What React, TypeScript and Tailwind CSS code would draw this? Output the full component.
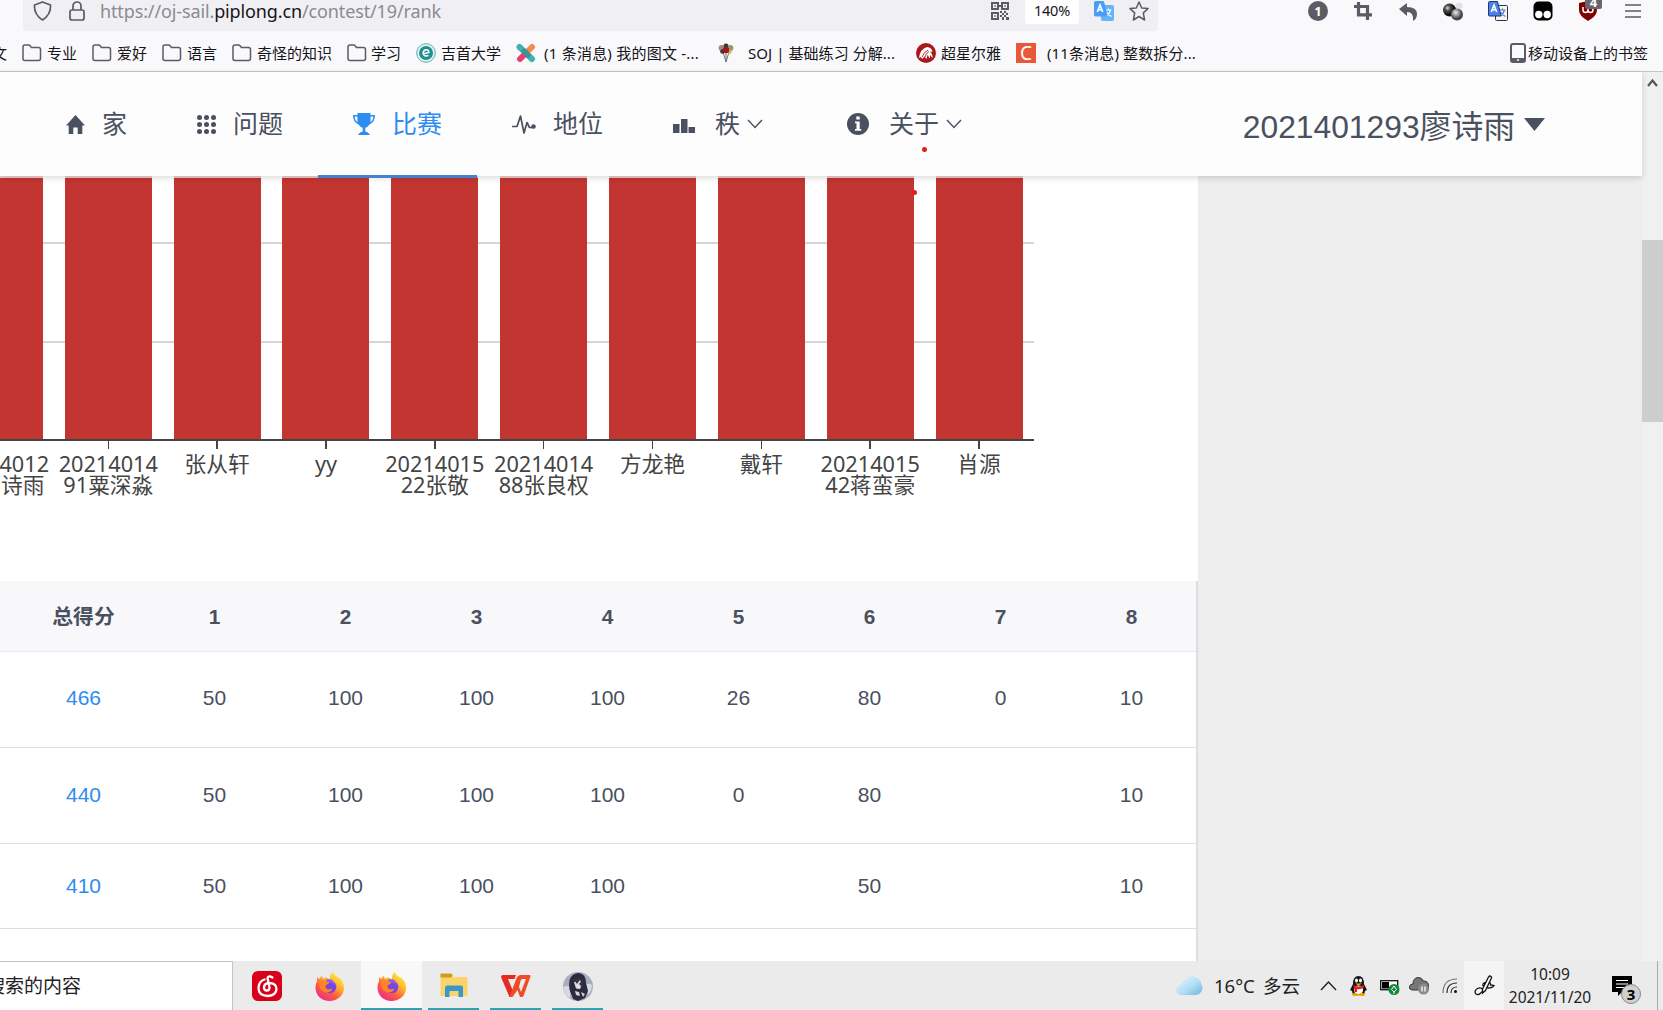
import React from "react";

const FolderIcon = () => (
  <svg width="20" height="18" viewBox="0 0 20 18" fill="none" stroke="#5b5b66" strokeWidth="1.5" className="shrink-0">
    <path d="M1 14.5V3Q1 1 3 1h3.5q1 0 1.600.8L9.400 3.400H16.500q2 0 2 2V14.500q0 2-2 2H3q-2 0-2-2Z" />
  </svg>
);

const Firefox = ({ id }: { id: string }) => (
  <svg width="29" height="29" viewBox="0 0 29 29">
    <defs>
      <linearGradient id={id} x1="0.85" y1="0.05" x2="0.2" y2="1">
        <stop offset="0" stopColor="#fff044" />
        <stop offset="0.35" stopColor="#ffb62e" />
        <stop offset="0.65" stopColor="#ff5a3c" />
        <stop offset="1" stopColor="#e8259a" />
      </linearGradient>
    </defs>
    <path d="M17.500 0c1.500 3 4 4.500 6 5.500l1.500 1c3 3 4 6 4 9.500C29 23.500 22.500 29 14.500 29S.5 23 .5 16c0-3 .5-5 1.500-6.500V5l2 2 3-3.500.5 3 4-1q2 .5 3.500 2Q14.500 3 17.500 0Z" fill={`url(#${id})`} />
    <circle cx="15" cy="15" r="6.300" fill="#7a45dc" />
    <path d="M10 8.500q5-2.500 9 .5l-2-.2q4 2 4.500 6-3-4-6-4Z" fill="#9059f0" />
    <path d="M4 9q3-2 6 .5l4.500.7q-.5 2-3.500 2.800-1.500 3 1.500 4.200 3 .5 5-1-2 5-7 4.300-5-1.500-6.500-6.500Z" fill="#ff8426" />
  </svg>
);

const Translate = ({ front, back, ring }: { front: string; back: string; ring: string }) => (
  <svg width="20" height="20" viewBox="0 0 20 20">
    <rect x="7.500" y="4.500" width="12" height="15" rx="1" fill={back} stroke={ring} />
    <path d="M11.500 9h6M14.500 7.500V9M16.500 9q-1 4-4 6M12.500 11q1.500 3 5 4.500" stroke={ring === "#333" ? "#4a7bd8" : "#fff"} strokeWidth="1.200" fill="none" />
    <path d="M1.500.5h8L13 15H1.500q-1 0-1-1v-12.500q0-1 1-1Z" fill={front} stroke={ring === "#333" ? "#223a70" : front} />
    <path d="m3.300 11 2.700-7 2.700 7M4.200 8.700h3.600" stroke="#fff" strokeWidth="1.600" fill="none" />
  </svg>
);

const ChevronDown = () => (
  <svg width="16" height="10" viewBox="0 0 16 10" fill="none" stroke="#495060" strokeWidth="1.400" className="shrink-0">
    <path d="m1 1 7 7.500L15 1" />
  </svg>
);

const Toolbar = () => (
  <div className="flex h-[31px] items-start bg-[#f9f9fb]">
    <div className="ml-[23px] flex h-[31px] w-[1135px] items-start rounded-b bg-[#f0f0f4]">
      <svg className="ml-[10px] mt-px" width="19" height="20" viewBox="0 0 19 20" fill="none" stroke="#5b5b66" strokeWidth="1.700">
        <path d="M9.500 1 17.500 4q.6 9.500-8 15Q.9 13.500 1.500 4Z" strokeLinejoin="round" />
      </svg>
      <svg className="ml-[17px] mt-px" width="16" height="20" viewBox="0 0 16 20" fill="none" stroke="#5b5b66" strokeWidth="1.700">
        <rect x="1" y="9" width="14" height="10" rx="2" />
        <path d="M4 9V5a4 4 0 0 1 8 0v4" />
      </svg>
      <div className="ml-[15px] w-[891px] whitespace-nowrap font-['Noto_Sans'] text-[18px] leading-[23px] tracking-[-0.13px] text-[#8a8a92]">
        https://oj-sail.<span className="text-[#15141a]">piplong.cn</span>/contest/19/rank
      </div>
      <svg className="mt-[2px]" width="18" height="18" viewBox="0 0 18 18" fill="#5b5b66">
        <path fillRule="evenodd" d="M0 0h8v8H0ZM2 2v4h4V2ZM10 0h8v8h-8Zm2 2v4h4V2ZM0 10h8v8H0Zm2 2v4h4v-4Z" />
        <path d="M3.300 3.300h1.500v1.500H3.300ZM13.300 3.300h1.500v1.500h-1.500ZM3.300 13.300h1.500v1.500H3.300ZM8 3h2v2H8ZM9 9h2v2H9ZM13 9h2v2h-2ZM11 11h2v2h-2ZM15 11h2v2h-2ZM9 13h2v2H9ZM13 13h2v2h-2ZM11 15h2v3h-2ZM15 15h3v3h-3Z" />
      </svg>
      <div className="ml-[16px] h-[24px] w-[54px] rounded-b-[3px] bg-white text-center font-['Noto_Sans'] text-[14.500px] leading-[21px] tracking-[-0.2px] text-[#15141a]">140%</div>
      <div className="ml-[15px] mt-px"><Translate front="#4a9df5" back="#64b5f8" ring="#64b5f8" /></div>
      <svg className="ml-[15px] mt-px" width="20" height="20" viewBox="0 0 20 20" fill="none" stroke="#5b5b66" strokeWidth="1.500" strokeLinejoin="round">
        <path d="m10 1 2.700 6 6.300.6-4.700 4.300L15.600 19 10 15.500 4.400 19l1.300-7.100L1 7.600 7.300 7Z" />
      </svg>
    </div>
    <div className="ml-[150px] mt-px flex items-start">
      <div className="mr-[26px] size-5 rounded-full bg-[#5b5b66] text-center font-['Noto_Sans'] text-[13px] font-bold leading-[20px] text-white">1</div>
      <svg className="mr-[27px]" width="18" height="20" viewBox="0 0 18 20" fill="none" stroke="#5b5b66" strokeWidth="3.200">
        <path d="M0 5.500h13.500V19M4.500 1v12.800H18" />
      </svg>
      <svg className="mr-[26px] mt-[2px]" width="18" height="18" viewBox="0 0 18 18" fill="#5b5b66">
        <path d="M0 6 8 0v4q10 0 10 7 0 5-4 7 1-9-6-9v4Z" />
      </svg>
      <svg className="mr-[25px]" width="20" height="20" viewBox="0 0 20 20">
        <defs>
          <radialGradient id="ballDark" cx=".35" cy=".35"><stop offset="0" stopColor="#ddd" /><stop offset=".4" stopColor="#555" /><stop offset="1" stopColor="#111" /></radialGradient>
          <radialGradient id="ballGrey" cx=".4" cy=".35"><stop offset="0" stopColor="#eee" /><stop offset=".6" stopColor="#888" /><stop offset="1" stopColor="#444" /></radialGradient>
        </defs>
        <circle cx="16" cy="5" r="3.500" fill="#e2e2e4" />
        <circle cx="6.500" cy="9" r="6.500" fill="url(#ballDark)" />
        <circle cx="14" cy="13.500" r="6" fill="url(#ballGrey)" />
      </svg>
      <div className="mr-[25px]"><Translate front="#4a7fe8" back="#f4f4f4" ring="#333" /></div>
      <svg className="mr-[26px]" width="20" height="20" viewBox="0 0 20 20">
        <rect x=".5" y=".5" width="19" height="19" rx="5" />
        <circle cx="5.800" cy="13.500" r="3.700" fill="#fff" /><circle cx="14.200" cy="13.500" r="3.700" fill="#fff" />
      </svg>
      <div className="relative mr-[28px] h-5 w-[18px]">
        <svg width="18" height="20" viewBox="0 0 18 20">
          <path d="M0 2 9 0l9 2v7q0 6-9 11Q0 15 0 9Z" fill="#800000" />
          <path d="M4 6v3q0 2.500 2.500 2.500T9 9V7m0 2q0 2.500 2.500 2.500T14 9t-2.500-2.500" fill="none" stroke="#fff" strokeWidth="1.500" />
        </svg>
        <div className="absolute -top-[9px] left-[6px] h-[17px] w-[17px] rounded-[2px] bg-[#66666c] text-center font-['Noto_Sans'] text-[13px] font-bold leading-[20px] text-white">4</div>
      </div>
      <svg className="mt-[3px]" width="16" height="14" viewBox="0 0 16 14" stroke="#5b5b66" strokeWidth="1.500"><path d="M0 1h16M0 7h16M0 13h16" /></svg>
    </div>
  </div>
);

const Bookmarks = () => (
  <div className="flex h-[41px] items-center overflow-hidden whitespace-nowrap border-b border-[#c6c6c0] bg-[#f9f9fb] pt-[4px] font-['Noto_Sans','Noto_Sans_CJK_SC',sans-serif] text-[15px] leading-[22px] text-[#15141a]">
    <div className="w-[22px] shrink-0"><span className="-ml-[8px]">文</span></div>
    <div className="flex w-[70px] shrink-0 items-center gap-[5px]"><FolderIcon />专业</div>
    <div className="flex w-[70px] shrink-0 items-center gap-[5px]"><FolderIcon />爱好</div>
    <div className="flex w-[70px] shrink-0 items-center gap-[5px]"><FolderIcon />语言</div>
    <div className="flex w-[115px] shrink-0 items-center gap-[5px]"><FolderIcon />奇怪的知识</div>
    <div className="flex w-[69px] shrink-0 items-center gap-[4px]"><FolderIcon />学习</div>
    <div className="flex w-[100px] shrink-0 items-center gap-[5px]">
      <svg width="20" height="20" viewBox="0 0 20 20">
        <circle cx="10" cy="10" r="9.300" fill="#e6f4f3" stroke="#57aeb0" />
        <circle cx="10" cy="10" r="7" fill="#1f8f90" />
        <path d="M6.500 11 13 9.500Q12.500 6.500 9.800 6.800 7 7.500 7.200 10.500 8 14 12.500 12.500" fill="none" stroke="#fff" strokeWidth="1.500" />
      </svg>
      吉首大学
    </div>
    <div className="flex w-[202px] shrink-0 items-center gap-[8px]">
      <svg width="20" height="20" viewBox="0 0 20 20" strokeWidth="6" strokeLinecap="round">
        <path d="M3.500 4 16 16" stroke="#3fb3ac" /><path d="M16 4 10 10" stroke="#f58a54" /><path d="M10 10 4 16" stroke="#ea3d6e" /><path d="m8 8 4 4" stroke="#2c9a98" strokeWidth="5" />
      </svg>
      <span className="tracking-[0.23px]">(1 条消息) 我的图文 -...</span>
    </div>
    <div className="flex w-[198px] shrink-0 items-center gap-[14px]">
      <svg width="16" height="20" viewBox="0 0 16 20">
        <path d="M5 9 8 19l3-10M8 10v9" stroke="#777" fill="none" />
        <circle cx="8" cy="3" r="2.600" fill="#39393d" /><circle cx="3.500" cy="5" r="2.900" fill="#a58a78" /><circle cx="12.500" cy="5" r="2.900" fill="#87a070" />
        <circle cx="4.500" cy="8.500" r="2.300" fill="#333" /><circle cx="11.500" cy="8.500" r="2.300" fill="#d7b64a" /><circle cx="8" cy="7" r="3.200" fill="#a01521" />
      </svg>
      <span className="tracking-[0.06px]">SOJ | 基础练习 分解...</span>
    </div>
    <div className="flex w-[100px] shrink-0 items-center gap-[5px]">
      <svg width="20" height="20" viewBox="0 0 20 20">
        <circle cx="10" cy="10" r="10" fill="#a8181d" />
        <path d="M3 15Q4 6 11 4q5 .5 5.500 5l-2.500-.5q3 3 2.500 6.500l-2.500-3v3.500l-2.500-3.500-1 4-2-2.500L6 16l-1-2Z" fill="#fff" />
        <path d="M6 14q2-5 6-7M9 14q1-4 4-5.500" stroke="#a8181d" strokeWidth=".9" fill="none" />
      </svg>
      超星尔雅
    </div>
    <div className="flex shrink-0 items-center gap-[11px]">
      <div className="flex h-[20px] w-[20px] items-center justify-center bg-[#e8593a] font-['Noto_Sans'] text-[19px] leading-none text-white">C</div>
      <span className="tracking-[0.12px]">(11条消息) 整数拆分...</span>
    </div>
    <div className="ml-auto mr-[15px] flex items-center gap-[2px]">
      <svg width="16" height="20" viewBox="0 0 16 20"><rect x="1" y="1" width="14" height="18" rx="2" fill="#fafafa" stroke="#5b5b66" strokeWidth="2" /><path d="M1 16.500h14" stroke="#5b5b66" strokeWidth="3" /><circle cx="8" cy="17" r="1" fill="#fff" /></svg>
      移动设备上的书签
    </div>
  </div>
);

const Nav = () => (
  <nav className="relative z-10 flex h-[104px] w-[1642px] shrink-0 items-center whitespace-nowrap bg-[#fdfdfd] font-['Liberation_Sans','Noto_Sans_CJK_SC',sans-serif] text-[25px] text-[#495060] shadow-[0_2px_6px_rgba(0,0,0,0.15)]">
    <div className="flex w-[318px] shrink-0 items-center">
      <svg className="ml-[66px] shrink-0" width="19" height="19" viewBox="0 0 19 19" fill="currentColor">
        <path d="M9.500 0 19 10.500h-2.700V19h-4.600v-6.500H7.300V19H2.700v-8.500H0Z" />
      </svg>
      <span className="ml-[17px] mt-[2px]">家</span>
      <svg className="ml-[70px] shrink-0" width="19" height="19" viewBox="0 0 19 19" fill="currentColor">
        {[2.5, 9.5, 16.5].map((y) => [2.5, 9.5, 16.5].map((x) => <circle key={`${x}-${y}`} cx={x} cy={y} r="2.500" />))}
      </svg>
      <span className="ml-[17px] mt-[2px]">问题</span>
    </div>
    <div className="relative flex h-full w-[159px] shrink-0 items-center text-[#2d8cf0]">
      <svg className="ml-[35px] shrink-0" width="22" height="22" viewBox="0 0 22 22" fill="currentColor">
        <path fillRule="evenodd" d="M4.500 0h13v2H22q0 7-5.500 9.500-1.500 2.500-4.200 3.200v3.800q3 .3 4.700 3.500H5q1.700-3.200 4.700-3.500v-3.800Q7 14 5.500 11.500 0 9 0 2h4.500ZM1.600 3.400q.4 4 3 6-.3-3-.2-6Zm18.800 0h-2.800q.1 3-.2 6 2.600-2 3-6Z" />
      </svg>
      <span className="ml-[17px] mt-[2px]">比赛</span>
      <div className="absolute bottom-[-2px] left-0 h-[3px] w-full bg-[#4582cc]" />
    </div>
    <svg className="ml-[35px] shrink-0" width="24" height="22" viewBox="0 0 24 22" fill="none" stroke="currentColor" strokeWidth="1.700">
      <path d="M0 13.500h5L8.500 3 12 20l3-10.500 2.500 5h4" strokeLinejoin="round" /><circle cx="21.500" cy="13.500" r="2.300" fill="currentColor" stroke="none" />
    </svg>
    <span className="ml-[17px] mt-[2px] w-[120px]">地位</span>
    <svg width="22" height="14" viewBox="0 0 22 14" fill="currentColor" className="mt-[3px] shrink-0"><path d="M0 5h6.500v9H0ZM8 0h6.500v14H8ZM15.500 8H22v6h-6.500Z" /></svg>
    <span className="ml-[20px] mr-[7px] mt-[2px]">秩</span>
    <ChevronDown />
    <svg className="ml-[84px] shrink-0" width="22" height="22" viewBox="0 0 22 22"><circle cx="11" cy="11" r="11" fill="currentColor" /><path d="M9.300 3.500h3.400v3H9.300ZM8 8.500h4.700v7.500h1.500v1.700H8V16h1.500v-5.800H8Z" fill="#fff" /></svg>
    <div className="relative ml-[20px] mr-[7px] mt-[2px]">关于
      <div className="absolute bottom-[-8px] left-[33px] size-[5px] rounded-full bg-[#e02020]" />
    </div>
    <ChevronDown />
    <div className="ml-auto mr-[97px] flex items-center text-[31.800px]">
      <span className="mt-[7px]">2021401293廖诗雨</span>
      <svg className="ml-[9px]" width="21" height="13" viewBox="0 0 21 13" fill="currentColor"><path d="M0 0h21L10.500 13Z" /></svg>
    </div>
  </nav>
);

const bars: string[][] = [
  ["20214012", "93廖诗雨"], ["20214014", "91粟深淼"], ["张从轩"], ["yy"], ["20214015", "22张敬"],
  ["20214014", "88张良权"], ["方龙艳"], ["戴轩"], ["20214015", "42蒋蛮豪"], ["肖源"],
];

const Chart = () => (
  <div className="relative h-[405px] w-[1198px] bg-white">
    <div className="relative flex h-[265px] w-[1034px] flex-col overflow-hidden border-b-2 border-[#444]">
      <div className="h-[68px] shrink-0 border-b-2 border-[#d5d5d5]" />
      <div className="h-[99px] shrink-0 border-b-2 border-[#d5d5d5]" />
      <div className="absolute inset-y-0 left-[-55px] flex">
        {bars.map((b, i) => <div key={i} className="flex w-[108.850px] justify-center"><div className="h-full w-[87px] bg-[#c23531]" /></div>)}
      </div>
      <div className="absolute inset-x-0 top-0 h-[2px] bg-white/75" />
    </div>
    <div className="ml-[-55px] flex">
      {bars.map((b, i) => (
        <div key={i} className="flex w-[108.850px] shrink-0 flex-col items-center whitespace-nowrap font-['Noto_Sans','Noto_Sans_CJK_SC',sans-serif] text-[21.700px] leading-[21px] text-[#444]">
          <div className="mb-[4px] h-[8px] w-[1.500px] bg-[#444]" />
          {b.map((t) => <div key={t}>{t}</div>)}
        </div>
      ))}
    </div>
    <div className="absolute left-[912px] top-[14px] size-[5px] rounded-full bg-[#e02020]" />
  </div>
);

const rows = [
  { h: "h-[96px] pb-[3px]", cells: ["466", "50", "100", "100", "100", "26", "80", "0", "10"] },
  { h: "h-[96px] pb-[2px]", cells: ["440", "50", "100", "100", "100", "0", "80", "", "10"] },
  { h: "h-[85px] pb-[1px]", cells: ["410", "50", "100", "100", "100", "", "50", "", "10"] },
];

const Table = () => (
  <div className="w-[1198px] flex-1 border-r-2 border-[#dddee1] bg-white font-['Liberation_Sans','Noto_Sans_CJK_SC',sans-serif] text-[21px] text-[#495060]">
    <div className="flex h-[71px] items-center border-b border-[#e9eaec] bg-[#f8f8fa] pl-[18px] pt-[1px] text-[20.800px] font-bold">
      {["总得分", "1", "2", "3", "4", "5", "6", "7", "8"].map((t) => <div key={t} className="w-[131px] shrink-0 text-center">{t}</div>)}
    </div>
    {rows.map((r) => (
      <div key={r.cells[0]} className={`flex items-center border-b border-[#dddee1] pl-[18px] ${r.h}`}>
        {r.cells.map((t, i) => <div key={i} className={`w-[131px] shrink-0 text-center ${i === 0 ? "text-[#2d8cf0]" : ""}`}>{t}</div>)}
      </div>
    ))}
  </div>
);

const Taskbar = () => (
  <div className="flex h-[49px] bg-[#ebebeb] font-['Noto_Sans','Noto_Sans_CJK_SC',sans-serif] text-[#222]">
    <div className="h-full w-[233px] shrink-0 overflow-hidden whitespace-nowrap border-r border-t border-[#c4c4c4] bg-white text-[19px] leading-[48px]">
      <span className="ml-[-14px]">搜索的内容</span>
    </div>
    <div className="ml-[19px] mt-[10px] w-[63px]">
      <svg width="30" height="30" viewBox="0 0 30 30">
        <rect width="30" height="30" rx="6" fill="#d8001b" />
        <path d="M20.500 6.500q-4-2.500-5 .5l2 9.500q0 3-2.500 3-3 0-3-3 0-4 5-4.500 7 0 7.500 5.500 0 7-9 7.500-9-.5-9-8Q7 10 12.500 8.500" fill="none" stroke="#fff" strokeWidth="2.300" strokeLinecap="round" />
      </svg>
    </div>
    <div className="mt-[11px] w-[46px]"><Firefox id="foxOne" /></div>
    <div className="flex w-[61px] justify-center border-b-2 border-[#2aa5b5] bg-[#f8f8f8] pt-[11px]"><Firefox id="foxTwo" /></div>
    <div className="ml-[6px] flex w-[51px] justify-center border-b-2 border-[#2aa5b5] pt-[12px]">
      <svg width="28" height="25" viewBox="0 0 28 25"><path d="M1 1h11l1 3h13q1.500 0 1.500 1.500V22q0 1-1 1H1.500q-1 0-1-1V1Z" fill="#fbd469" /><path d="M1.500.5h9.500q1.500 0 1.500 1.500 0 2.500-2 2.500H.5v-3q0-1 1-1Z" fill="#cf9a20" /><path d="M5 24V14.500q0-2 2-2h14q2 0 2 2V24h-4.500v-6h-9v6Z" fill="#3d96c9" /></svg>
    </div>
    <div className="ml-[11px] flex w-[51px] justify-center border-b-2 border-[#2aa5b5] pt-[14px]">
      <svg width="30" height="23" viewBox="0 0 30 23"><path d="M2 0h13l-1.500 4H7l5 12-1.500 6H8.500L0 2Q0 0 2 0Z" fill="#e52a22" /><path d="M11.500 22H8.500L15 4.500Q16.500 0 20 0h8.500q1.500 0 1 1.500L22.500 21q-.5 1-1.500 1h-2l-2.500-7Zm6.500-10 2 5 5-13h-3.500Q20 4 19.500 6Z" fill="#f04b25" fillRule="evenodd" /></svg>
    </div>
    <div className="ml-[11px] flex w-[51px] justify-center border-b-2 border-[#2aa5b5] pt-[11px]">
      <svg width="30" height="29" viewBox="0 0 30 29">
        <ellipse cx="15" cy="14.500" rx="15" ry="14.500" fill="#a9adbc" />
        <path d="M0 15q7-3 8 2l-1 9Q1 23 0 15Zm22-3q5-1 7 1 0 5-3 9l-4-3Z" fill="#d7d9e2" />
        <path d="M9 24Q5 17 6.500 8 9 1 16 1q7 1 7 10l2 8-3 7-7 3-5-2Z" fill="#2b2a3f" />
        <path d="m11 10 6-2 2 4-2 5-4-.5Z" fill="#e6dde4" /><path d="m12 19 4 1 1 4-4-1Zm6 1 4 2-2 3Z" fill="#d8d4e0" /><path d="m11 8 8-3-5 7Zm5 4 4-5v9Z" fill="#35334b" />
      </svg>
    </div>
    <div className="ml-auto flex items-center">
      <svg width="27" height="20" viewBox="0 0 27 20">
        <defs><linearGradient id="sky" x1="0" y1="0" x2="1" y2="1"><stop offset="0" stopColor="#e6f6ff" /><stop offset=".55" stopColor="#b4def5" /><stop offset="1" stopColor="#6cb4e0" /></linearGradient></defs>
        <path d="M5 19a5 5 0 0 1 0-10Q6 3 11 3q3-4 8-2 5 1 6 6 3 5 0 9-2 3-5 3Z" fill="url(#sky)" />
      </svg>
      <div className="ml-[11px] w-[49px] whitespace-nowrap text-[18.500px]">16°C</div>
      <div className="w-[57px] whitespace-nowrap text-[18.500px]">多云</div>
      <svg width="17" height="10" viewBox="0 0 17 10" fill="none" stroke="#222" strokeWidth="1.400"><path d="m1 9 7.500-8L16 9" /></svg>
      <svg className="ml-[13px]" width="17" height="20" viewBox="0 0 17 20">
        <path d="M3 8Q3 0 8.500 0T14 8l3 6-2 1-1 4H3l-1-4-2-1Z" fill="#171717" /><ellipse cx="8.500" cy="14" rx="4.500" ry="4.500" fill="#fff" /><ellipse cx="6.500" cy="4.500" rx="1.500" ry="2" fill="#fff" /><ellipse cx="10.500" cy="4.500" rx="1.500" ry="2" fill="#fff" /><path d="M5 7.500h7l-3.500 2Z" fill="#f5a300" /><path d="M3 9q5.500 3 11 0v2.500Q10 14 7 13v3H4.500v-3.500Z" fill="#e31a22" /><path d="M2 18q3-2 6 0v2H3Zm7 0q3-2 6 0l-1 2H9Z" fill="#f5a300" />
      </svg>
      <svg className="ml-[13px] mt-[3px]" width="20" height="16" viewBox="0 0 20 16"><rect x=".7" y="1.700" width="17" height="9" fill="#fff" stroke="#111" strokeWidth="1.300" /><path d="M2 3h7v6.500H2Z" /><circle cx="14" cy="10.500" r="5.500" fill="#11883a" /><path d="m14 7 2.500 3.500L14 13l-2.500-2.500Zm0 5v3" stroke="#fff" fill="none" /></svg>
      <svg className="ml-[9px]" width="21" height="18" viewBox="0 0 21 18"><path d="M4 13q-4 0-3.500-3.500Q1 7 4 7q0-6 5-6.500 4 0 5.500 3.500 5 0 5 5v4Z" fill="#777" stroke="#333" /><circle cx="14.500" cy="12" r="5.500" fill="#8a8a8a" /><path d="M13 9.500v5m3-5v5" stroke="#fff" strokeWidth="1.300" /></svg>
      <svg className="ml-[12px]" width="16" height="16" viewBox="0 0 16 16" fill="none" stroke="#777" strokeWidth="1.200"><path d="M1 15Q1 1 15 1" /><path d="M5 15Q5 5 15 5M9 15q0-6 6-6" stroke="#333" /><circle cx="13.500" cy="13.500" r="1.500" fill="#111" stroke="none" /></svg>
      <div className="ml-[6px] flex h-[49px] w-[40px] items-center justify-center bg-[#f4f4f4]">
        <svg width="21" height="21" viewBox="0 0 21 21" fill="none" stroke="#111" strokeWidth="1.300"><path d="M8.500 14 14.500 2q1-1.500 2.300-.8 1.200.8.400 2.300L11.500 15.500 8.500 18ZM12 7.500q-4 .5-3 3.500M8.500 14.500Q7 12 3.500 13.500-.5 16 2 19q3 2 6-2.500M15 7q2 1 1.500 3l3.500.5q-1 2.500-6.500 2.500" /></svg>
      </div>
      <div className="ml-[4px] w-[84px] whitespace-nowrap text-center text-[15.500px] leading-[23px]"><div>10:09</div><div>2021/11/20</div></div>
      <div className="relative ml-[20px] h-[22px] w-[45px]">
        <svg width="20" height="22" viewBox="0 0 20 22"><path d="M0 1h20v16H10l-4 4v-4H0Z" /><path d="M4 5.500h12M4 9h12M4 12.500h8" stroke="#fff" strokeWidth="1.200" /></svg>
        <div className="absolute left-[9px] top-[9px] size-[20px] rounded-full border border-[#888] bg-[#cfcfcf] text-center text-[15px] font-bold leading-[18px] text-black">3</div>
      </div>
      <div className="h-[49px] w-[6px] border-l border-[#aaa]" />
    </div>
  </div>
);

export default function App() {
  return (
    <div className="flex h-[1010px] w-[1663px] flex-col overflow-hidden bg-[#ededed]">
      <Toolbar />
      <Bookmarks />
      <div className="flex h-[889px]">
        <div className="flex w-[1642px] flex-col">
          <Nav />
          <Chart />
          <Table />
        </div>
        <div className="w-[21px] bg-[#f0f0f0]">
          <svg className="ml-[5px] mt-[6px]" width="11" height="9" viewBox="0 0 11 9" fill="none" stroke="#555" strokeWidth="2.200"><path d="m1 8 4.500-5.500L10 8" /></svg>
          <div className="mt-[153px] h-[182px] bg-[#cdcdcd]" />
        </div>
      </div>
      <Taskbar />
    </div>
  );
}
